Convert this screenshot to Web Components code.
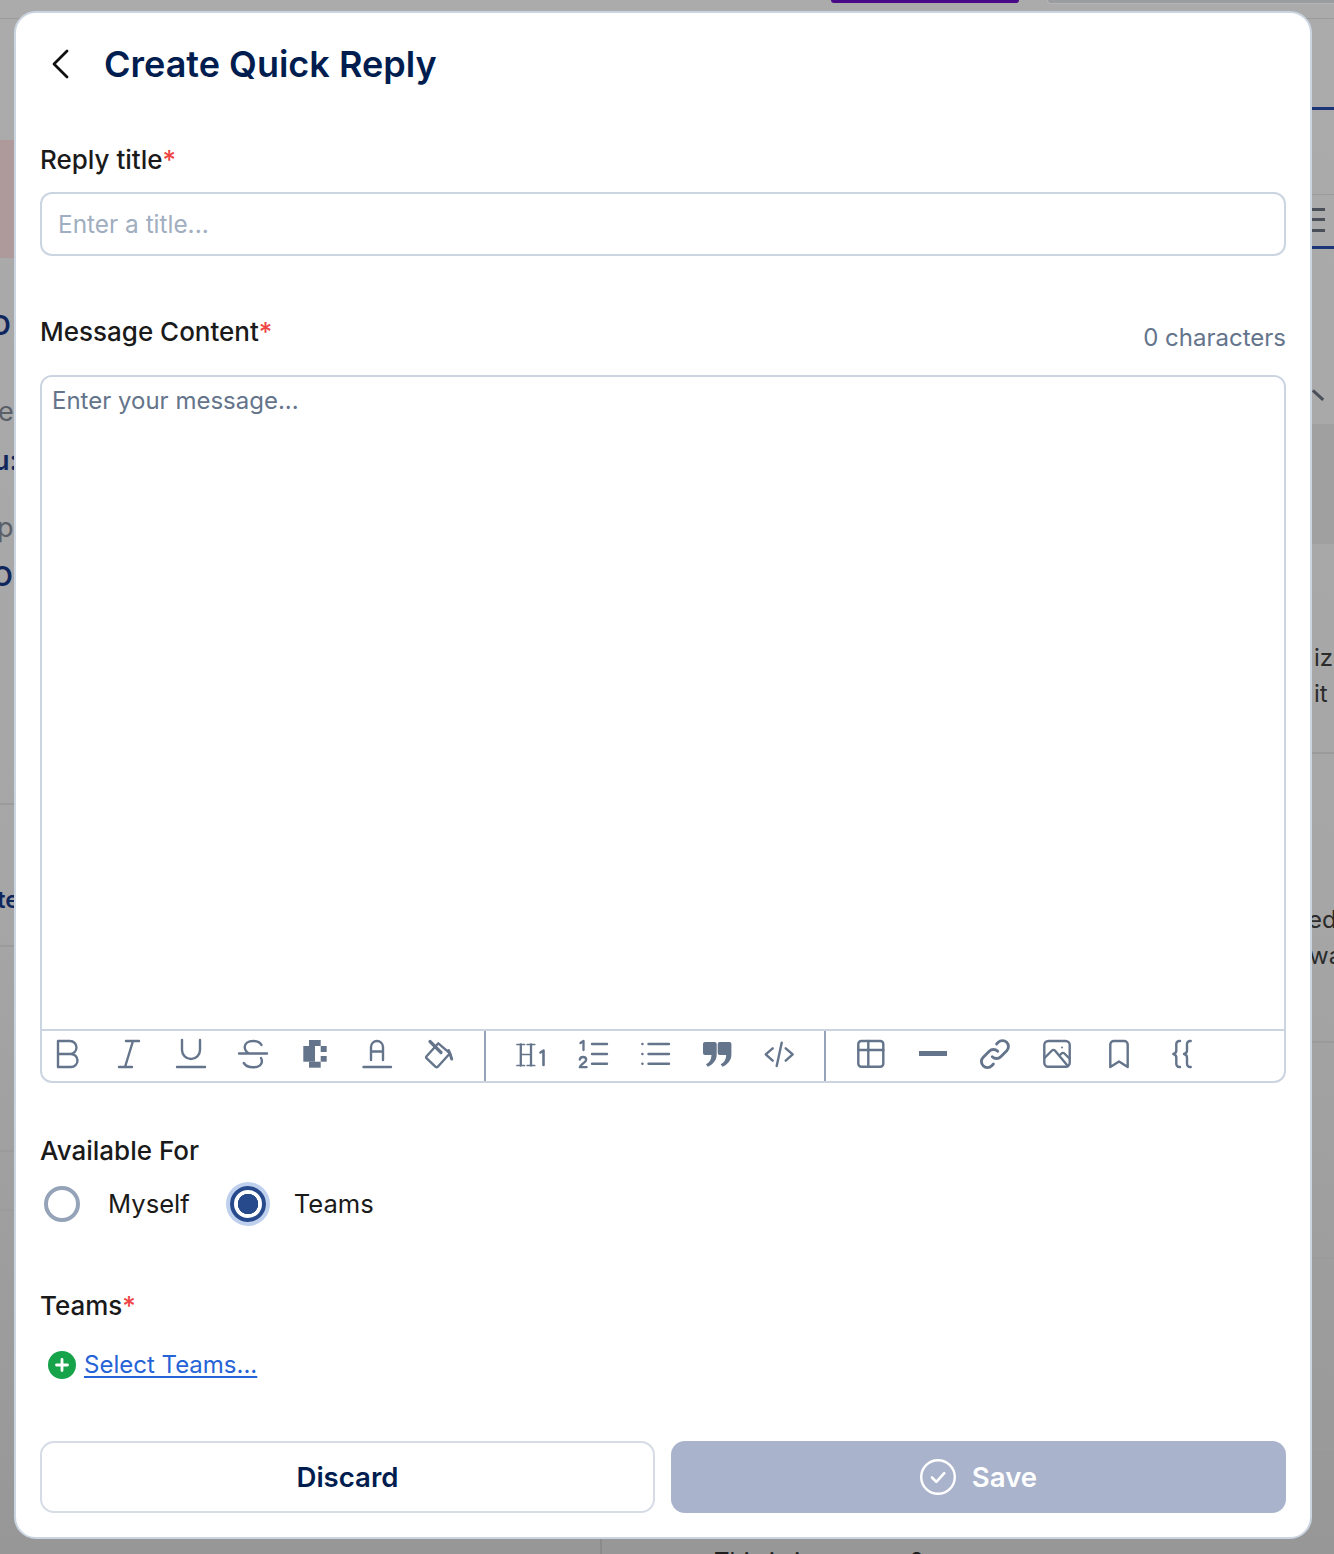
<!DOCTYPE html>
<html lang="en">
<head>
<meta charset="utf-8">
<title>Create Quick Reply</title>
<style>
  html, body { margin: 0; padding: 0; }
  body { width: 1334px; height: 1554px; overflow: hidden; font-family: Inter, "Liberation Sans", sans-serif; }
</style>
</head>
<body>
<app-stage>
  <quick-reply-dialog>
    <dialog-header slot="header">Create Quick Reply</dialog-header>
    <form-label required>Reply title</form-label>
    <text-field placeholder="Enter a title..."></text-field>
    <message-editor></message-editor>
    <audience-picker></audience-picker>
    <teams-picker></teams-picker>
    <dialog-actions></dialog-actions>
  </quick-reply-dialog>
</app-stage>

<script>
class AppStage extends HTMLElement {
  constructor() {
    super();
    this.attachShadow({ mode: 'open' });
    this.shadowRoot.innerHTML = `
      <style>
        :host { display: block; position: relative; width: 1334px; height: 1554px; overflow: hidden; background: #a9a9a9; font-family: Inter, "Liberation Sans", sans-serif; box-sizing: border-box; padding: 11px 22px 15px 14px; }
        .page { position: absolute; inset: 0; overflow: hidden; background: linear-gradient(#ababab, #a6a6a6 900px, #979797); }
        .page * { position: absolute; }
        .line { background: #9b9b9b; height: 2px; }
        .navy { background: #1c3578; height: 3px; left: 1312px; width: 22px; }
        .txt { font-size: 24px; line-height: 32px; white-space: nowrap; color: #2b2b2b; }
        .side { font-size: 27px; }
        .blue { color: #10275e; font-weight: 600; }
        .grey { color: #5b5f68; }
        .wrap { position: relative; z-index: 1; }
      </style>
      <div class="page">
        <div style="left:831px;top:0;width:188px;height:3px;background:#480a86;border-radius:0 0 8px 8px"></div>
        <div style="left:1047px;top:0;width:287px;height:3px;background:#9a9c9f;border:solid #b5b5b5;border-width:0 0 1px 1px;border-radius:0 0 0 8px"></div>
        <div class="line" style="left:0;top:18px;width:1334px;height:1px"></div>
        <div style="left:0;top:140px;width:14px;height:118px;background:#ae9a9b"></div>
        <div class="navy" style="top:107px"></div>
        <div class="line" style="left:1312px;top:194px;width:22px;height:1px"></div>
        <div class="navy" style="top:246px"></div>
        <div style="left:1312px;top:208px;width:13px;height:2.5px;background:#4b4f5a;box-shadow:0 10px #4b4f5a,0 21px #4b4f5a"></div>
        <div style="left:1313px;top:389px;width:14px;height:2.5px;background:#4b4f5a;transform:rotate(42deg);transform-origin:left"></div>
        <div style="left:1312px;top:424px;width:22px;height:120px;background:#a0a0a0"></div>
        <span class="txt side blue" style="left:-10px;top:310px">O</span>
        <span class="txt side grey" style="left:-2px;top:396px">e</span>
        <span class="txt side blue" style="left:-7px;top:445px">u:</span>
        <span class="txt side grey" style="left:-3px;top:512px">p</span>
        <span class="txt side blue" style="left:-8px;top:561px">O</span>
        <span class="txt blue" style="left:-3px;top:884px">te</span>
        <span class="txt" style="left:1314px;top:642px">iza</span>
        <span class="txt" style="left:1314px;top:678px">it</span>
        <span class="txt" style="left:1308px;top:904px">ed</span>
        <span class="txt" style="left:1309px;top:940px">wa</span>
        <span class="txt" style="left:714px;top:1546px;color:#1f1f1f">This is just a test ?</span>
        <div class="line" style="left:0;top:803px;width:14px"></div>
        <div class="line" style="left:0;top:945px;width:14px"></div>
        <div class="line" style="left:0;top:1150px;width:14px"></div>
        <div class="line" style="left:0;top:1209px;width:14px"></div>
        <div class="line" style="left:1312px;top:752px;width:22px"></div>
        <div class="line" style="left:1312px;top:1041px;width:22px"></div>
        <div class="line" style="left:1312px;top:1257px;width:22px"></div>
        <div class="line" style="left:1312px;top:1448px;width:22px"></div>
        <div style="left:600px;top:1539px;width:2px;height:15px;background:#8a8a8a"></div>
      </div>
      <div class="wrap"><slot></slot></div>
    `;
  }
}

class QuickReplyDialog extends HTMLElement {
  constructor() {
    super();
    this.attachShadow({ mode: 'open' });
    this.shadowRoot.innerHTML = `
      <style>
        :host { display: flex; flex-direction: column; box-sizing: border-box; width: 1298px; height: 1528px; padding: 0 24px 24px; background: #fff; border: 2px solid #cbd5e1; border-radius: 22px; color: #1a1a1a; }
      </style>
      <slot name="header"></slot>
      <slot></slot>
    `;
  }
}

class DialogHeader extends HTMLElement {
  constructor() {
    super();
    this.attachShadow({ mode: 'open' });
    this.shadowRoot.innerHTML = `
      <style>
        :host { display: flex; align-items: center; height: 102px; margin-bottom: 29px; gap: 33px; color: #001d4f; font-size: 36px; font-weight: 600; }
        svg { margin-left: 11px; flex: none; }
      </style>
      <svg width="20" height="30" viewBox="0 0 20 30" fill="none" stroke="#111" stroke-width="2.8" stroke-linecap="round" stroke-linejoin="round"><path d="M16 2 3 15l13 13"/></svg>
      <slot></slot>
    `;
  }
}

class FormLabel extends HTMLElement {
  constructor() {
    super();
    this.attachShadow({ mode: 'open' });
    this.shadowRoot.innerHTML = `
      <style>
        :host { display: block; font-size: 26px; line-height: 32px; font-weight: 500; color: #1a1a1a; }
        b { font-weight: 500; color: #ef4444; }
      </style>
      <slot></slot><b hidden>*</b>
    `;
  }
  connectedCallback() {
    this.shadowRoot.querySelector('b').hidden = !this.hasAttribute('required');
  }
}

class TextField extends HTMLElement {
  constructor() {
    super();
    this.attachShadow({ mode: 'open' });
    this.shadowRoot.innerHTML = `
      <style>
        :host { display: block; margin-top: 16px; }
        input { display: block; box-sizing: border-box; width: 100%; height: 64px; padding: 0 16px; border: 2px solid #cbd5e1; border-radius: 12px; background: #fff; font: 400 24.4px Inter, "Liberation Sans", sans-serif; outline: none; }
        input::placeholder { color: #a0aec0; opacity: 1; }
      </style>
      <input type="text">
    `;
  }
  connectedCallback() {
    this.shadowRoot.querySelector('input').placeholder = this.getAttribute('placeholder') || '';
  }
}

// toolbar glyphs, all drawn in a 32x32 box
const QUOTE = 'M4 4h9.700a2 2 0 0 1 2 2v10c0 6-3 10-9 12.800l-1.700-2.600c3.500-1.800 5.300-4.500 5.500-9.200H4a2 2 0 0 1-2-2V6a2 2 0 0 1 2-2z';
const ICONS = {
  bold: '<path d="M7 3h12a6.500 6.500 0 0 1 0 13H7zM7 16h13a6.500 6.500 0 0 1 0 13H7z"/>',
  italic: '<path d="M13 3h13M6 29h13M20 3l-8 26"/>',
  underline: '<path d="M7 2v10a9 9 0 0 0 18 0V2M2 29h28"/>',
  strike: '<path d="M24.500 7c-1.500-2.800-4.300-4-8.300-4-5 0-8.500 2.300-8.500 6 0 2.600 1.300 4.700 4 6.500M24 20c.6 1 .9 2 .9 3 0 4-3.700 6.300-8.900 6.300-4.200 0-7.400-1.400-9.200-4.300M2 15.500h28"/>',
  glyph: '<g fill="#64748b" stroke="none"><rect x="10" y="2" width="11.700" height="6"/><rect x="4.300" y="8" width="11.700" height="15.700"/><rect x="10" y="23.700" width="11.700" height="6"/><rect x="21.700" y="8" width="6" height="6"/><rect x="21.700" y="18" width="6" height="5.700"/></g>',
  color: '<path d="M10 22V9a6 6 0 0 1 12 0v13M10 13.500h12M2.500 29h27.500"/>',
  fill: '<path d="M15.300 5.300 27 15.300 14.800 28.700a1.600 1.600 0 0 1-2.200.100L3.700 20.400a1.600 1.600 0 0 1-.100-2.200z"/><path d="M7 3.500 18 14.500" stroke-width="3.200"/><path d="M25.500 12.500c1.500 3 2.500 5.500 3.200 8.500" stroke-width="3"/>',
  h1: '<path stroke-width="1.700" d="M2 6.500h7.500M12.200 6.500h7.500M2 27.500h7.500M12.200 27.500h7.500M5.800 16.500h10"/><path stroke-width="2.300" d="M5.800 6.500v21M16 6.500v21"/><path stroke-width="2.600" d="M25.500 14.500l3-2V27"/>',
  ol: '<path d="M15 6h15M15 16h15M15 25.700h15"/><path stroke-width="2.300" d="M3.500 5l3-2v9"/><path stroke-width="2.300" d="M2.800 21.500c.3-1.700 1.500-2.500 3.200-2.500 1.800 0 3.200 1 3.200 2.700 0 2.800-5.500 4.300-6.400 7.500h6.800"/>',
  ul: '<path d="M9.500 6H30M9.500 16H30M9.500 25.700H30"/><g fill="#64748b" stroke="none"><circle cx="3.400" cy="6" r="1.300"/><circle cx="3.400" cy="16" r="1.300"/><circle cx="3.400" cy="25.700" r="1.300"/></g>',
  quote: `<g fill="#64748b" stroke="none"><path d="${QUOTE}"/><path transform="translate(14.700)" d="${QUOTE}"/></g>`,
  code: '<path d="M9.700 10.300l-7 6 7 6.400M22.700 10.300l7 6-7 6.400M18.700 4.700 13.700 28"/>',
  table: '<rect x="3.300" y="3" width="25" height="25.700" rx="3"/><path d="M3.300 12h25M13.300 3v25.700"/>',
  rule: '<rect x="2" y="13" width="28" height="5" fill="#64748b" stroke="none"/>',
  link: '<g transform="translate(-2 -2) scale(1.5)" stroke-width="1.900"><path d="M13.828 10.172a4 4 0 0 0-5.656 0l-4 4a4 4 0 1 0 5.656 5.656l1.102-1.101M10.172 13.828a4 4 0 0 0 5.656 0l4-4a4 4 0 0 0-5.656-5.656l-1.100 1.100"/></g>',
  image: '<rect x="3.300" y="3" width="25.400" height="25.700" rx="4"/><path d="M3.500 20l7.500-7.500a2 2 0 0 1 2.900 0L26 27M18.500 17.500l2-2a2 2 0 0 1 2.900 0l5 5"/><circle cx="21" cy="9.500" r="1" fill="#64748b" stroke="none"/>',
  bookmark: '<path d="M7.300 29V6.500A3.500 3.500 0 0 1 10.800 3h10.400a3.500 3.500 0 0 1 3.500 3.500V29L16 23.500z"/>',
  braces: '<path d="M15 3h-.7a3 3 0 0 0-3 3v6.500c0 1.800-1 3-3 3.500 2 .5 3 1.700 3 3.500V26a3 3 0 0 0 3 3h.7M25.700 3H25a3 3 0 0 0-3 3v6.500c0 1.800-1 3-3 3.500 2 .5 3 1.700 3 3.500V26a3 3 0 0 0 3 3h.7"/>',
};

class ToolIcon extends HTMLElement {
  constructor() {
    super();
    this.attachShadow({ mode: 'open' });
  }
  connectedCallback() {
    this.shadowRoot.innerHTML = `
      <style>
        :host { display: flex; align-items: center; justify-content: center; box-sizing: border-box; width: 52px; height: 100%; padding-bottom: 4px; }
        svg { display: block; fill: none; stroke: #64748b; stroke-width: 2.400; stroke-linecap: round; stroke-linejoin: round; }
      </style>
      <svg width="32" height="32" viewBox="0 0 32 32">${ICONS[this.getAttribute('name')] || ''}</svg>
    `;
  }
}

class MessageEditor extends HTMLElement {
  constructor() {
    super();
    this.attachShadow({ mode: 'open' });
    const group = names => names.map(n => `<tool-icon name="${n}"></tool-icon>`).join('');
    this.shadowRoot.innerHTML = `
      <style>
        :host { display: block; margin-top: 60px; }
        .head { display: flex; justify-content: space-between; align-items: flex-end; height: 44px; margin-bottom: 15px; }
        .count { font-size: 24px; line-height: 32px; color: #64748b; padding-bottom: 6px; }
        .box { box-sizing: border-box; height: 708px; display: flex; flex-direction: column; border: 2px solid #cbd5e1; border-radius: 12px; overflow: hidden; }
        textarea { flex: 1; display: block; border: 0; outline: 0; resize: none; padding: 8px 10px; font: 400 24px/32px Inter, "Liberation Sans", sans-serif; background: #fff; }
        textarea::placeholder { color: #64748b; opacity: 1; }
        .bar { flex: none; height: 52px; border-top: 2px solid #cbd5e1; display: flex; gap: 10px; box-sizing: border-box; margin-left: -1px; }
        .sep { flex: none; width: 2px; margin: 0 9px; background: #94a3b8; }
      </style>
      <div class="head">
        <form-label required style="align-self:flex-start">Message Content</form-label>
        <span class="count">0 characters</span>
      </div>
      <div class="box">
        <textarea placeholder="Enter your message..."></textarea>
        <div class="bar">
          ${group(['bold', 'italic', 'underline', 'strike', 'glyph', 'color', 'fill'])}
          <div class="sep"></div>
          ${group(['h1', 'ol', 'ul', 'quote', 'code'])}
          <div class="sep"></div>
          ${group(['table', 'rule', 'link', 'image', 'bookmark', 'braces'])}
        </div>
      </div>
    `;
  }
}

class RadioOption extends HTMLElement {
  constructor() {
    super();
    this.attachShadow({ mode: 'open' });
    this.shadowRoot.innerHTML = `
      <style>
        :host { display: flex; align-items: center; gap: 28px; font-size: 25.6px; line-height: 32px; color: #1a1a1a; }
        i { display: block; box-sizing: border-box; width: 36px; height: 36px; border-radius: 50%; border: 4px solid #94a3b8; background: #fff; }
        :host([checked]) i { border-color: #264a8c; background: radial-gradient(circle, #264a8c 0 10px, #fff 10.5px); box-shadow: 0 0 0 4px #bfd0ef; }
      </style>
      <i></i><slot></slot>
    `;
  }
}

class AudiencePicker extends HTMLElement {
  constructor() {
    super();
    this.attachShadow({ mode: 'open' });
    this.shadowRoot.innerHTML = `
      <style>
        :host { display: block; margin-top: 52px; }
        .row { display: flex; gap: 40px; margin: 19px 0 0 4px; }
      </style>
      <form-label>Available For</form-label>
      <div class="row">
        <radio-option>Myself</radio-option>
        <radio-option checked>Teams</radio-option>
      </div>
    `;
  }
}

class TeamsPicker extends HTMLElement {
  constructor() {
    super();
    this.attachShadow({ mode: 'open' });
    this.shadowRoot.innerHTML = `
      <style>
        :host { display: block; margin-top: 68px; }
        a { display: flex; align-items: center; gap: 8px; margin: 27px 0 0 8px; color: #2563d6; font-size: 24px; line-height: 32px; }
        span { text-decoration: underline; text-underline-offset: 3px; }
        svg { flex: none; }
      </style>
      <form-label required>Teams</form-label>
      <a>
        <svg width="28" height="28" viewBox="0 0 28 28"><circle cx="14" cy="14" r="14" fill="#16a34a"/><path d="M14 8.500v11M8.500 14h11" stroke="#fff" stroke-width="2.800" stroke-linecap="round"/></svg>
        <span>Select Teams...</span>
      </a>
    `;
  }
}

class DialogActions extends HTMLElement {
  constructor() {
    super();
    this.attachShadow({ mode: 'open' });
    this.shadowRoot.innerHTML = `
      <style>
        :host { display: grid; grid-template-columns: 1fr 1fr; gap: 16px; margin-top: auto; }
        button { display: flex; align-items: center; justify-content: center; gap: 16px; box-sizing: border-box; height: 72px; border-radius: 14px; font: 600 27.6px Inter, "Liberation Sans", sans-serif; }
        .discard { background: #fff; color: #001d4f; border: 2px solid #d5dce5; }
        .save { background: #a9b3cc; color: #fff; border: 0; }
      </style>
      <button class="discard">Discard</button>
      <button class="save">
        <svg width="36" height="36" viewBox="0 0 36 36" fill="none" stroke="#fff" stroke-linecap="round" stroke-linejoin="round"><circle cx="18" cy="18" r="16.800" stroke-width="2.400"/><path d="M12 18.500l4.300 4.300 8-8.600" stroke-width="2.600"/></svg>
        Save
      </button>
    `;
  }
}

customElements.define('app-stage', AppStage);
customElements.define('quick-reply-dialog', QuickReplyDialog);
customElements.define('dialog-header', DialogHeader);
customElements.define('form-label', FormLabel);
customElements.define('text-field', TextField);
customElements.define('tool-icon', ToolIcon);
customElements.define('message-editor', MessageEditor);
customElements.define('radio-option', RadioOption);
customElements.define('audience-picker', AudiencePicker);
customElements.define('teams-picker', TeamsPicker);
customElements.define('dialog-actions', DialogActions);
</script>
</body>
</html>
